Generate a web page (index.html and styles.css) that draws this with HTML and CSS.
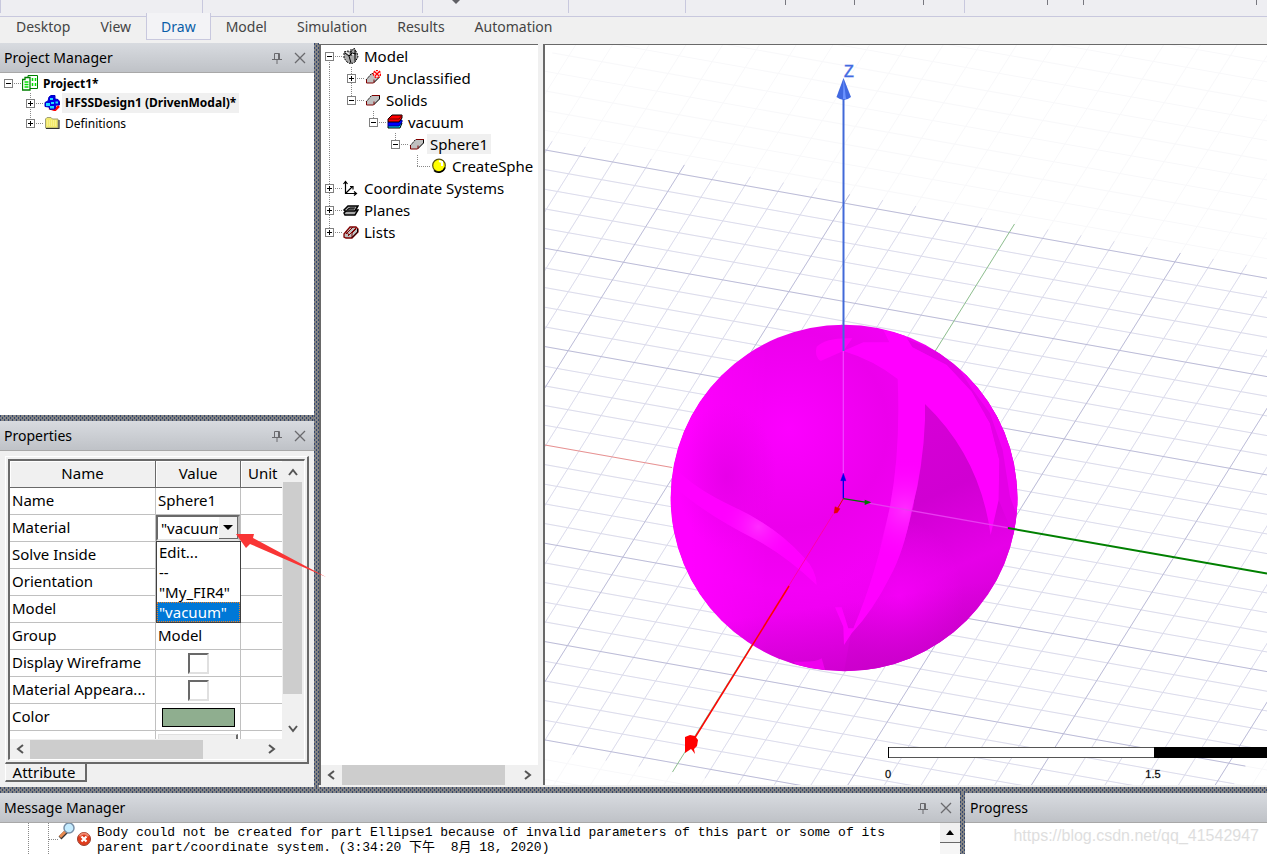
FILE: index.html
```html
<!DOCTYPE html>
<html lang="en">
<head>
<meta charset="utf-8">
<title>HFSS Desktop</title>
<link rel="stylesheet" href="styles.css">
</head>
<body>
<svg class="defs" width="0" height="0" aria-hidden="true">
  <symbol id="pin" viewBox="0 0 12 12"><path d="M3.500 1.500h5v6h-5zM7.500 1.500v6M1 7.500h10M6 7.500V12" fill="none" stroke="#6a6a6e" stroke-width="1"/></symbol>
  <symbol id="close" viewBox="0 0 12 12"><path d="M1 1l10 10M11 1L1 11" fill="none" stroke="#6a6a6e" stroke-width="1.300"/></symbol>
  <symbol id="left" viewBox="0 0 8 10"><path d="M7 1L2 5l5 4" fill="none" stroke="#555" stroke-width="2"/></symbol>
  <symbol id="right" viewBox="0 0 8 10"><path d="M1 1l5 4-5 4" fill="none" stroke="#555" stroke-width="2"/></symbol>
  <symbol id="up" viewBox="0 0 10 8"><path d="M1 7l4-5 4 5" fill="none" stroke="#555" stroke-width="2"/></symbol>
  <symbol id="down" viewBox="0 0 10 8"><path d="M1 1l4 5 4-5" fill="none" stroke="#555" stroke-width="2"/></symbol>
  <symbol id="solid" viewBox="0 0 16 16"><path d="M7 3h8v4l-6 6H1V10z" fill="#c0c0c0"/><path d="M1 10l6-7" fill="none" stroke="#000" stroke-dasharray="2 1"/><path d="M14.500 3v4L9 12.500" fill="none" stroke="#000"/><path d="M7 3.500h8M1.500 9.500v3.500h7M9 9.500v3.500" fill="none" stroke="#800000"/></symbol>
</svg>
<div class="app">
  <header class="ribbon">
    <div class="groups" aria-hidden="true">
      <i class="g g1"></i><i class="g"></i><i class="g"></i><i class="g"></i><i class="g"></i><i class="g dark"></i><i class="g dark"></i><i class="g dark"></i><i class="g"></i><i class="g dark"></i><i class="g dark"></i><i class="g dark"></i>
      <svg class="more" viewBox="0 0 8 4"><path d="M0 0h8L4 4z" fill="#606066"/></svg>
    </div>
    <nav class="tabs">
      <button>Desktop</button><button>View</button><button class="on">Draw</button><button>Model</button><button>Simulation</button><button>Results</button><button>Automation</button>
    </nav>
  </header>

  <main class="work">
    <div class="left">
      <section class="panel project">
        <div class="title"><h2>Project Manager</h2><button aria-label="Pin"><svg><use href="#pin"/></svg></button><button aria-label="Close"><svg><use href="#close"/></svg></button></div>
        <ul class="tree small">
          <li class="bold"><span class="node"><button class="box" aria-label="Collapse"></button></span>
            <svg class="icon" viewBox="0 0 16 16"><path d="M6 .5h9.500v13H6z" fill="#fff" stroke="#008000"/><path d="M.5 4.500H3v-2h5v12.500H.5z" fill="#fff" stroke="#008000" stroke-width="1.300"/><path d="M2.500 7h4M2.500 9.500h4M2.500 12h4" stroke="#00e000" stroke-width="1.500"/><path d="M10.500 3v3M13.500 3v3M10.500 8v3M13.500 8v3" stroke="#00e000" stroke-width="1.500"/></svg><span class="label">Project1*</span></li>
          <li class="bold"><span class="guide"></span><span class="node up dn"><button class="box" aria-label="Expand"></button></span>
            <svg class="icon" viewBox="0 0 16 16"><path d="M5 13l6 2 4-4" stroke="#f00" stroke-width="2.500" fill="none"/><path d="M5 2l2-1.500h4V4l3 .5 1.500 2V10H12l-1 4-5 .5-1-2.500-4-.5V7.500L4 6z" fill="#0000e8" stroke="#0000c0"/><path d="M6 3h3v2H6zM2 8h4v3H2zM7 7h3v2H7zM11.500 6.500h2.500v2h-2.500zM6 11h4v2.500H6z" fill="#20d8ff"/></svg><span class="label active">HFSSDesign1 (DrivenModal)*</span></li>
          <li><span class="guide"></span><span class="node up"><button class="box" aria-label="Expand"></button></span>
            <svg class="icon" viewBox="0 0 16 16"><path d="M1.500 13V4L3 2.500h4L8.500 4H14v9z" fill="#f2e96c" stroke="#a0a078"/><path d="M2 13.500h13V5" fill="none" stroke="#303030" stroke-width="1.200"/><path d="M3 6h10M3 8h10M3 10h10" stroke="#fff9b0" stroke-dasharray="1 1"/></svg><span class="label">Definitions</span></li>
        </ul>
      </section>
      <div class="split row"></div>
      <section class="panel props">
        <div class="title"><h2>Properties</h2><button aria-label="Pin"><svg><use href="#pin"/></svg></button><button aria-label="Close"><svg><use href="#close"/></svg></button></div>
        <div class="propbody">
          <div class="frame">
            <div class="sheet">
              <div class="clip">
                <table>
                  <colgroup><col class="c1"><col class="c2"><col class="c3"></colgroup>
                  <thead><tr><th>Name</th><th>Value</th><th>Unit</th></tr></thead>
                  <tbody>
                    <tr><td>Name</td><td>Sphere1</td><td></td></tr>
                    <tr><td><label for="mat">Material</label></td><td class="combo-cell"><div class="combo"><select id="mat"><option>"vacuum"</option><option>"My_FIR4"</option></select><span class="drop"><svg viewBox="0 0 10 5"><path d="M0 0h10L5 5z"/></svg></span></div>
                      <ul class="popup"><li>Edit...</li><li>--</li><li>"My_FIR4"</li><li class="sel">"vacuum"</li></ul></td><td></td></tr>
                    <tr><td>Solve Inside</td><td></td><td></td></tr>
                    <tr><td>Orientation</td><td></td><td></td></tr>
                    <tr><td>Model</td><td></td><td></td></tr>
                    <tr><td>Group</td><td>Model</td><td></td></tr>
                    <tr><td><label for="wire">Display Wireframe</label></td><td class="mid"><input type="checkbox" id="wire"></td><td></td></tr>
                    <tr><td><label for="appear">Material Appeara...</label></td><td class="mid"><input type="checkbox" id="appear"></td><td></td></tr>
                    <tr><td>Color</td><td class="mid"><button class="swatch" aria-label="Color"></button></td><td></td></tr>
                    <tr><td>Transparent</td><td class="mid"><button class="num">0</button></td><td></td></tr>
                  </tbody>
                </table>
              </div>
              <div class="vbar"><button aria-label="Up"><svg><use href="#up"/></svg></button><i></i><button aria-label="Down"><svg><use href="#down"/></svg></button></div>
              <div class="hbar"><button aria-label="Left"><svg><use href="#left"/></svg></button><i></i><button aria-label="Right"><svg><use href="#right"/></svg></button></div>
            </div>
          </div>
          <button class="attr">Attribute</button>
        </div>
        <svg class="callout" viewBox="0 0 90 44"><path d="M0 0h18l-1 4 73 39-76-33-4 4z" fill="#f93535"/></svg>
      </section>
    </div>
    <div class="split col"></div>
    <section class="model">
      <ul class="tree">
        <li><span class="node dn"><button class="box" aria-label="Collapse"></button></span>
          <svg class="icon" viewBox="0 0 16 16"><path d="M1 4l4-1 3 1 3-4 3 5 1 4-3 5-4 2-4-2-3-4z" fill="#aaa" stroke="#000" stroke-dasharray="2 1"/><path d="M2 5l4 3 2 7M8 1v7M6 8l3-3 4 1M12 2v11" fill="none" stroke="#000"/><path d="M3 4l3 2M9 6l2 1" stroke="#fff"/></svg><span class="label">Model</span></li>
        <li><span class="guide v"></span><span class="node up dn"><button class="box" aria-label="Expand"></button></span>
          <svg class="icon" viewBox="0 0 16 16"><use href="#solid"/><circle cx="12" cy="4" r="3.500" fill="#fff" stroke="#f00" stroke-width="1.500" stroke-dasharray="2 1"/><path d="M10 2l4 4M14 2l-4 4" stroke="#f00" stroke-width="1.300"/></svg><span class="label">Unclassified</span></li>
        <li><span class="guide v"></span><span class="node up"><button class="box" aria-label="Collapse"></button></span><span class="guide-free"></span>
          <svg class="icon"><use href="#solid"/></svg><span class="label">Solids</span></li>
        <li><span class="guide v"></span><span class="guide"></span><span class="node up"><button class="box" aria-label="Collapse"></button></span>
          <svg class="icon" viewBox="0 0 16 16"><path d="M1 12l3-3h11l-2 5H1z" fill="#00e8ff" stroke="#000"/><path d="M1 8l3-2h11v2l-3 4H1z" fill="#00f" stroke="#000080"/><path d="M1 5l4-4h10v3l-3 4H1z" fill="#f00" stroke="#000"/><path d="M1 5h11l3-4" fill="none" stroke="#700"/></svg><span class="label">vacuum</span></li>
        <li><span class="guide v"></span><span class="guide"></span><span class="guide"></span><span class="node up"><button class="box" aria-label="Collapse"></button></span>
          <svg class="icon"><use href="#solid"/></svg><span class="label active">Sphere1</span></li>
        <li><span class="guide v"></span><span class="guide"></span><span class="guide"></span><span class="guide"></span><span class="node up"></span>
          <svg class="icon" viewBox="0 0 16 16"><circle cx="8" cy="7.500" r="6.300" fill="#ff0" stroke="#55500a" stroke-width="1.200"/><path d="M3 12.500a6.800 6.800 0 0 0 11-3" fill="none" stroke="#000" stroke-width="1.500"/><path d="M8 3l3 1v4" fill="none" stroke="#fff" stroke-width="2"/></svg><span class="label">CreateSphe</span></li>
        <li><span class="node up dn"><button class="box" aria-label="Expand"></button></span>
          <svg class="icon" viewBox="0 0 16 16"><path d="M2.500 2v11.500H13M2.500 13.500L9 7M.5 4l2-2.500L4.500 4M11 11.500l2.500 2-2.500 2M7 6.500h3v3" fill="none" stroke="#000" stroke-width="1.200"/></svg><span class="label">Coordinate Systems</span></li>
        <li><span class="node up dn"><button class="box" aria-label="Expand"></button></span>
          <svg class="icon" viewBox="0 0 16 16"><path d="M1 11l3-3h11l-3 5H2z" fill="#aaa" stroke="#000" stroke-width="1.500"/><path d="M1 8l4-4h10l-3 5H2z" fill="#aaa" stroke="#000" stroke-width="1.500"/><path d="M4 8l3-2h5M5 7h6" fill="none" stroke="#000"/></svg><span class="label">Planes</span></li>
        <li><span class="node up"><button class="box" aria-label="Expand"></button></span>
          <svg class="icon" viewBox="0 0 16 16"><path d="M1 10l6-7h6l2 2v3l-6 6H3l-2-1z" fill="#c0c0c0" stroke="#800000" stroke-width="1.300"/><path d="M3 10l7-7M5 12l8-8M9 14V9l4-4M3 7l3 4" fill="none" stroke="#800000"/><path d="M14.500 5v3L9 13.500" fill="none" stroke="#000"/></svg><span class="label">Lists</span></li>
      </ul>
      <div class="hbar wide"><button aria-label="Left"><svg><use href="#left"/></svg></button><i></i><button aria-label="Right"><svg><use href="#right"/></svg></button></div>
    </section>
    <section class="view" aria-label="3D view">
      <svg class="scene" viewBox="545 45 722 740" preserveAspectRatio="xMinYMin slice">
        <defs>
          <radialGradient id="body" cx="0.34" cy="0.3" r="0.75"><stop offset="0" stop-color="#fc00ff"/><stop offset=".38" stop-color="#ec00ec"/><stop offset=".62" stop-color="#f400f6"/><stop offset="1" stop-color="#e400e6"/></radialGradient>
          <linearGradient id="edge" x1="0" x2="1"><stop offset="0" stop-color="#f0f"/><stop offset=".06" stop-color="#f0f"/><stop offset=".28" stop-color="#f0f" stop-opacity="0"/></linearGradient>
          <linearGradient id="shade" x1="0.2" y1="0" x2="0.5" y2="1"><stop offset="0" stop-color="#d800d8"/><stop offset=".4" stop-color="#d000d2"/><stop offset=".68" stop-color="#e600e8"/><stop offset="1" stop-color="#cc00cc"/></linearGradient>
          <linearGradient id="low" x1="0.4" y1="0" x2="0.55" y2="1"><stop offset=".8" stop-color="#c800c8" stop-opacity="0"/><stop offset="1" stop-color="#c800c8" stop-opacity=".75"/></linearGradient>
          <radialGradient id="glint"><stop offset="0" stop-color="#ff2cff"/><stop offset="1" stop-color="#f0f" stop-opacity="0"/></radialGradient>
          <radialGradient id="soft"><stop offset="0" stop-color="#e000e2" stop-opacity=".7"/><stop offset="1" stop-color="#e400e6" stop-opacity="0"/></radialGradient>
          <radialGradient id="lift"><stop offset="0" stop-color="#f400f6"/><stop offset="1" stop-color="#f000f2" stop-opacity="0"/></radialGradient>
          <clipPath id="ball"><circle cx="552" cy="564" r="520"/></clipPath>
          <clipPath id="bandclip"><path d="M713 207L795 282Q800 440 755 600Q730 730 690 800L640 780Q680 640 690 590Q722 420 713 207Z"/></clipPath>
          <clipPath id="leftclip"><path d="M45 475Q110 540 220 590Q350 650 430 740Q470 780 470 825Q380 740 290 690Q130 610 45 530Z"/></clipPath>
        </defs>
        <g id="grid" fill="none"></g>
        <path d="M545 445L672 467.500" stroke="#e89090"/>
        <path d="M1014.500 224L672.500 772" stroke="#8fc08f"/>
        <g transform="translate(660 310) scale(.33333)">
          <circle cx="552" cy="564" r="520" fill="url(#body)"/>
          <g clip-path="url(#ball)">
            <circle cx="552" cy="564" r="520" fill="url(#edge)"/>
            <ellipse cx="200" cy="500" rx="150" ry="220" fill="url(#soft)"/>
            <path d="M795 282L1016 322L1080 565L1050 760L890 980L700 1075L552 1085L575 958Q700 850 760 590Z" fill="url(#shade)"/>
            <ellipse cx="720" cy="860" rx="190" ry="230" fill="url(#lift)"/>
            <circle cx="552" cy="564" r="520" fill="url(#low)"/>
            <path d="M735 85L873 140L955 226L1026 322L1080 490L1070 700L1016 570L1018 450L990 340L935 245L860 165L757 112Z" fill="#e400e6"/>
            <path d="M873 140L955 220L1026 322L1060 430L1080 640L1050 560L1028 420L990 310L935 235Z" fill="#f400f6"/>
            <path d="M550 123L610 97L688 97L670 60L735 75L757 112L860 165L935 245L990 340L1018 450L1016 570L992 675Q960 440 795 282L795 330Q790 470 755 600Q730 730 690 800Q640 900 575 970L552 1005L550 950L525 892L545 892L565 955L580 955Q650 790 690 590Q722 420 713 207Q640 150 550 123Z" fill="#f0f"/>
            <circle cx="735" cy="600" r="160" fill="url(#glint)" clip-path="url(#bandclip)"/>
            <path d="M482 153L550 123L577 85Q500 82 470 110Q462 140 482 153Z" fill="#ff00fa"/>
            <path d="M45 475Q110 540 220 590Q350 650 430 740Q470 780 470 825Q380 740 290 690Q130 610 45 530Z" fill="#f0f"/>
            <circle cx="295" cy="650" r="120" fill="url(#glint)" clip-path="url(#leftclip)"/>
            <path d="M400 1055Q470 1058 485 1045L495 1080L420 1072Z" fill="#f000ee"/>
          </g>
          <path d="M550 123V490" stroke="#f040ff" stroke-width="4"/>
          <path d="M630 580L1042 653" stroke="#e83cf0" stroke-width="4"/>
          <path d="M520 612L386 828" stroke="#ff00a8" stroke-width="3"/>
          <path d="M550 566V505" stroke="#0000e8" stroke-width="4"/><path d="M550 490l8 22h-16z" fill="#0000e8" stroke="#0000e8"/>
          <path d="M550 566L620 577" stroke="#007400" stroke-width="4"/><path d="M634 577l-20-8v16z" fill="#007400"/>
          <path d="M550 566L530 600" stroke="#e80000" stroke-width="3"/><path d="M525 590l15 6-8 12-10 2z" fill="#e80000" stroke="#e80000"/>
        </g>
        <path d="M843.500 98V351" stroke="#4169d8" stroke-width="2"/>
        <path d="M843.500 78l7.500 19q-7 6-14.500 0z" fill="#4169e1"/><path d="M843.500 78l2.500 21h-3z" fill="#6b93ff"/>
        <text class="axis" x="844" y="77">Z</text>
        <path d="M1008 528L1267 573.500" stroke="#008000" stroke-width="2"/>
        <path d="M789 586L691 744" stroke="#f00" stroke-width="1.500"/>
        <path d="M685 737l5-2 5 1 3 4-1 6-3 3 1 5-3-4-1-1-6 4z" fill="#f00"/>
        <path d="M888.500 747.500H1267M888.500 757.500H1267" stroke="#555"/><path d="M889 748h265v9H889z" fill="#fff"/><path d="M888.500 747v11" stroke="#000"/><path d="M1154 747h113v11h-113z"/>
        <text class="scale" x="888" y="778">0</text><text class="scale" x="1153" y="778">1.5</text>
      </svg>
    </section>
  </main>
  <div class="split row"></div>
  <footer class="bottom">
    <section class="panel messages">
      <div class="title"><h2>Message Manager</h2><button aria-label="Pin"><svg><use href="#pin"/></svg></button><button aria-label="Close"><svg><use href="#close"/></svg></button></div>
      <div class="log">
        <i class="rail a"></i><i class="rail b"></i>
        <svg class="msgicon" viewBox="0 0 44 24"><path d="M0 16.500h10" stroke="#888" stroke-dasharray="1 1"/><path d="M11 15l7-7" stroke="#333" stroke-width="4"/><path d="M11 14l6-6" stroke="#e88a50" stroke-width="3"/><circle cx="20" cy="5" r="5" fill="#c4ecff" stroke="#7890a8" stroke-width="1.500"/><circle cx="35" cy="16" r="6.500" fill="#e03c1c" stroke="#9c4030"/><path d="M30.500 13q4.500-5 9 0" stroke="#f08870" stroke-width="2" fill="none"/><path d="M32.500 13.500l5 5M37.500 13.500l-5 5" stroke="#fff" stroke-width="2.200"/></svg>
        <p>Body could not be created for part Ellipse1 because of invalid parameters of this part or some of its<br>parent part/coordinate system. (3:34:20 下午&nbsp; 8月 18, 2020)</p>
        <div class="rail-scroll"><button aria-label="Up"><svg viewBox="0 0 8 5"><path d="M4 0l4 5H0z"/></svg></button></div>
      </div>
    </section>
    <div class="split col"></div>
    <section class="panel progress">
      <div class="title"><h2>Progress</h2></div>
      <div class="mark">https://blog.csdn.net/qq_41542947</div>
    </section>
  </footer>
</div>
<script src="grid.js"></script>
</body>
</html>
```
FILE: styles.css
```css
* { box-sizing: border-box; }
body { margin: 0; background: #f0f0f0; color: #000; font: 15px "Noto Sans", "Open Sans", sans-serif; }
button { font: inherit; color: inherit; padding: 0; border: 0; background: none; }
ul { margin: 0; padding: 0; list-style: none; }
svg { display: block; }
.defs { position: absolute; }
.app { display: flex; flex-direction: column; height: 100vh; overflow: hidden; }

.ribbon { flex: none; height: 43px; background: #f0f0f0; }
.groups { position: relative; height: 17px; background: #eeeef2; border-bottom: 1px solid #c8c8de; display: grid; grid-template-columns: 203px 151px 69px 146px 117px 100px 69px 69px 41px 83px 36px 173px 1fr; }
.g { border-right: 1px solid #c8c8de; height: 13px; }
.g1 { border-left: 1px solid #c8c8de; }
.g.dark { border-color: #77777f; height: 5px; }
.more { position: absolute; left: 452px; top: 0; width: 8px; height: 4px; }
.tabs { display: flex; position: relative; margin-top: -4px; padding-left: 1px; }
.tabs button { height: 27px; padding: 0 14px; color: #444; font: 14px "Noto Sans", sans-serif; border: 1px solid transparent; border-top: 0; }
.tabs .on { color: #0a5ea8; background: #f3f3f6; border-color: #c8c8de; }

.work { flex: 1; display: flex; min-height: 0; }
.left { width: 314px; flex: none; display: flex; flex-direction: column; min-height: 0; }
.split { flex: none; background-color: #858585; background-image: conic-gradient(from 0deg at 1px 2px, transparent 75%, #34476e 0), conic-gradient(from 0deg at 1px 2px, transparent 75%, #34476e 0); background-size: 4px 4px; background-position: 0 0, 2px 2px; }
.split.row { height: 6px; }
.split.col { width: 5px; }
.panel { display: flex; flex-direction: column; min-height: 0; position: relative; }
.title { flex: none; height: 30px; display: flex; align-items: center; gap: 11px; padding: 0 8px 0 4px; background: linear-gradient(#d8dbe0, #bfc2c7); border-bottom: 1px solid #a8a8a8; }
.title h2 { flex: 1; margin: 0; font: 14px "Noto Sans", sans-serif; }
.title svg { width: 12px; height: 12px; }

.project { flex: none; height: 372px; background: #fff; }
.tree li { display: flex; align-items: center; height: 22px; white-space: nowrap; }
.tree.small { padding: 0 4px; font: 12px "Noto Sans", sans-serif; }
.tree.small li { height: 20px; }
.bold { font-weight: bold; }
.guide { flex: none; width: 22px; align-self: stretch; }
.guide.v { background: repeating-linear-gradient(#888 0 1px, transparent 1px 2px) 4px 0 / 1px 100% no-repeat; }
.node { flex: none; width: 18px; align-self: stretch; display: flex; align-items: center; background: repeating-linear-gradient(90deg, #888 0 1px, transparent 1px 2px) 4px 50% / 14px 1px no-repeat, repeating-linear-gradient(#888 0 1px, transparent 1px 2px) 4px 0 / 1px 0 no-repeat; }
.node.up { background-size: 14px 1px, 1px 50%; }
.node.up.dn { background-size: 14px 1px, 1px 100%; }
.node.dn:not(.up) { background-size: 14px 1px, 1px 50%; background-position: 4px 50%, 4px 100%; }
.box { width: 9px; height: 9px; flex: none; border: 1px solid #808080; background: linear-gradient(#000, #000) center / 5px 1px no-repeat #fff; }
.box[aria-label="Expand"] { background: linear-gradient(#000, #000) center / 5px 1px no-repeat, linear-gradient(#000, #000) center / 1px 5px no-repeat #fff; }
.icon { flex: none; width: 16px; height: 16px; }
.label { padding: 0 3px; margin-left: 2px; }
.tree .active { background: #f0f0f0; line-height: 20px; }

.props { flex: 1; background: #f0f0f0; }
.propbody { flex: 1; display: flex; flex-direction: column; align-items: flex-start; min-height: 0; padding: 5px; }
.frame { flex: 1; align-self: stretch; min-height: 0; border: 1px solid #fff; border-right: 2px solid #696969; border-bottom: 2px solid #696969; padding: 2px; }
.sheet { height: 100%; display: grid; grid-template: minmax(0, 1fr) 20px / minmax(0, 1fr) 22px; border: 2px solid #696969; border-right: 1px solid #fff; border-bottom: 1px solid #fff; }
.clip { overflow: hidden; background: #fff; }
table { table-layout: fixed; border-collapse: separate; border-spacing: 0; width: 281px; }
.c1 { width: 146px; } .c2 { width: 85px; } .c3 { width: 50px; }
th { height: 27px; padding: 0 0 2px; font-weight: normal; background: #f0f0f0; border: solid #696969; border-width: 0 1px 1px 0; box-shadow: inset 1px 1px #fff; }
th:last-child { text-align: left; padding-left: 7px; }
td { height: 27px; padding: 0 2px 2px; border: solid #c0c0c0; border-width: 0 1px 1px 0; white-space: nowrap; line-height: 20px; }
.mid { text-align: center; padding-bottom: 0; }
.mid > * { display: block; margin: auto; }
.combo-cell { position: relative; padding: 0; }
.combo { position: relative; height: 26px; border: 2px solid #696969; border-right-color: #b8b8b8; border-bottom-color: #e4e4e4; }
.combo select { width: 60px; height: 22px; appearance: none; border: 0; border-radius: 0; padding: 0 0 0 3px; background: #fff; font: inherit; color: #000; display: block; }
.drop { position: absolute; right: 0; top: 0; width: 19px; height: 22px; background: #f0f0f0; border-bottom: 1px solid #696969; border-right: 1px solid #696969; display: grid; place-items: center; pointer-events: none; }
.drop svg { width: 10px; height: 5px; }
.popup { position: absolute; left: 0; right: -1px; top: 26px; z-index: 2; background: #fff; border: 1px solid #404040; }
.popup li { height: 20px; padding-left: 2px; }
.popup .sel { background: #0078d7; color: #fff; outline: 1px dotted #f08020; outline-offset: -1px; }
input[type="checkbox"] { appearance: none; width: 21px; height: 21px; margin: 0 auto; background: #fff; border: 2px solid #696969; border-right-color: #e0e0e0; border-bottom-color: #e0e0e0; }
.swatch { width: 73px; height: 19px; background: #8fae8f; border: 1px solid #000; }
.num { width: 80px; height: 20px; line-height: 14px; background: #f0f0f0; border: 1px solid #e0e0e0; border-right: 2px solid #696969; }
.vbar, .hbar { display: flex; background: #f0f0f0; }
.vbar { flex-direction: column; padding: 0 2px 0 1px; }
.vbar button { height: 21px; }
.vbar i { flex: 1; background: #cdcdcd; margin-bottom: 24px; }
.vbar svg { margin: auto; width: 10px; height: 8px; }
.hbar button { width: 20px; }
.hbar svg { margin: auto; width: 8px; height: 10px; }
.hbar i { flex: 1; background: #cdcdcd; margin: 1px 59px 0 0; }
.sheet .hbar { padding-right: 22px; grid-column: 1 / 3; }
.attr { height: 18px; width: 82px; line-height: 16px; padding-right: 3px; border: solid #696969; border-width: 0 2px 2px 0; border-left: 1px solid #fff; }
.callout { position: absolute; left: 236px; top: 113px; width: 90px; height: 44px; z-index: 5; }

.model { width: 219px; flex: none; margin: 1px 0 2px; display: flex; flex-direction: column; background: #fff; border: solid #696969; border-width: 1px 0 0 2px; min-width: 0; }
.model .tree { flex: 1; overflow: hidden; padding: 0 0 0 4px; }
.hbar.wide { height: 20px; }
.hbar.wide i { margin: 0 13px 0 1px; }
.view { flex: 1; min-width: 0; margin: 1px 0 2px 5px; border: solid #696969; border-width: 1px 0 0 2px; background: #fff; }
.scene { width: 100%; height: 100%; }
.axis { font: 16px "Liberation Sans", sans-serif; fill: #4169e1; stroke: #4169e1; stroke-width: 1px; stroke-opacity: .5; }
.scale { font: 11px "Liberation Sans", sans-serif; text-anchor: middle; stroke: #000; stroke-width: 1px; stroke-opacity: .2; }

.bottom { flex: none; display: flex; height: 61px; }
.messages { flex: 0 0 960px; background: #fff; }
.log { flex: 1; display: flex; position: relative; overflow: hidden; }
.rail { flex: none; width: 20px; border-right: 1px dotted #888; }
.rail.a { width: 29px; }
.msgicon { flex: none; width: 44px; height: 24px; }
.log p { flex: 1; margin: 2px 0 0 4px; font: 13px/15px "Liberation Mono", "Noto Sans CJK SC", monospace; white-space: nowrap; }
.rail-scroll { width: 20px; background: #f6f6f6; }
.rail-scroll button { width: 20px; height: 20px; background: #f0f0f0; border-bottom: 1px solid #696969; }
.rail-scroll svg { width: 8px; height: 5px; margin: auto; }
.progress { flex: 1; background: #fff; }
.progress .title { padding-left: 5px; }
.mark { text-align: right; padding: 4px 8px 0 0; font: 16px "Liberation Sans", sans-serif; color: #dedede; }
```
FILE: grid.js
```js
// Ground plane of the 3D view: a and b are the projected unit steps of the plane.
const origin = [843.5, 498];
const a = [33.07, 5.88];
const b = [11.07, -17.7];
const point = (i, j) => `${(origin[0] + i * a[0] + j * b[0]).toFixed(1)} ${(origin[1] + i * a[1] + j * b[1]).toFixed(1)}`;
const grid = document.getElementById("grid");

function draw(d, color) {
  const path = document.createElementNS("http://www.w3.org/2000/svg", "path");
  path.setAttribute("d", d);
  path.setAttribute("stroke", color);
  grid.appendChild(path);
}

function lines(i0, i1, j0, j1, keep) {
  let d = "";
  for (let i = Math.ceil(i0); i <= i1; i++) if (keep(i)) d += `M${point(i, j0)}L${point(i, j1)}`;
  for (let j = Math.ceil(j0); j <= j1; j++) if (keep(j)) d += `M${point(i0, j)}L${point(i1, j)}`;
  return d;
}

draw(lines(-15.5, 30, -25, 40, () => true), "#f8f8fa");
draw(lines(-15.5, 15.5, -15.5, 15.5, k => k % 5 !== 0), "#dcdcec");
draw(lines(-15.5, 15.5, -15.5, 15.5, k => k !== 0 && k % 5 === 0), "#bcbcd8");
```
